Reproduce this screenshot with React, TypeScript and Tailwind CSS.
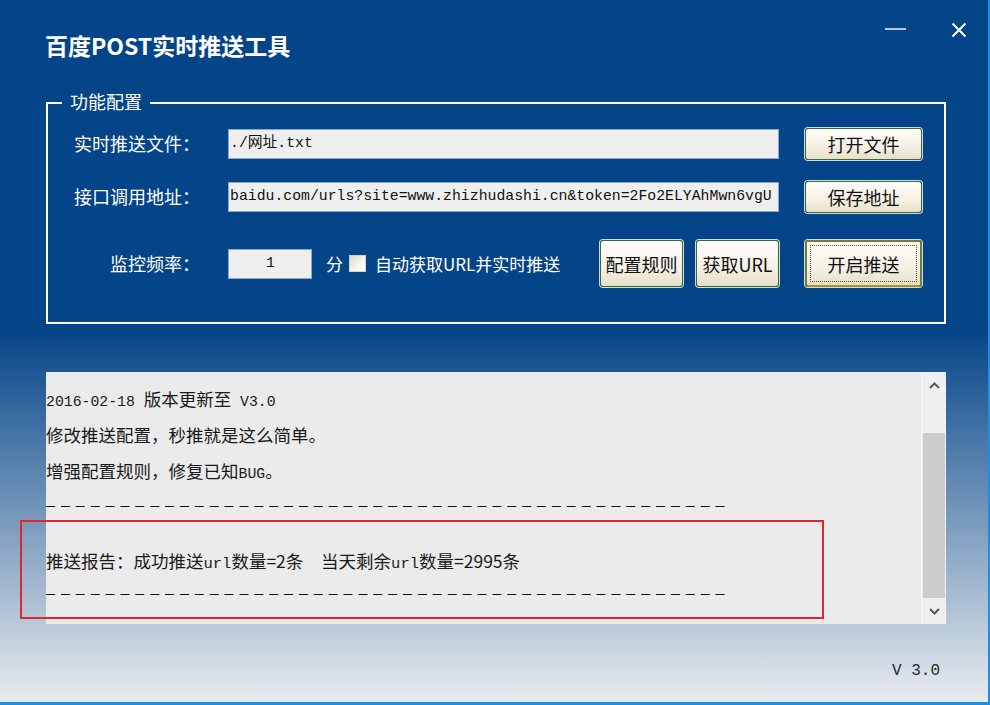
const sans = "font-['Noto_Sans_CJK_SC',sans-serif]";
const mono = "font-['Liberation_Mono','Noto_Sans_CJK_SC',monospace]";

function WinButton({ label, primary }: { label: string; primary?: boolean }) {
  return (
    <button
      className={`relative flex h-full w-full items-center justify-center rounded-[3px] bg-[linear-gradient(180deg,#fefdf9_0%,#f4f0e4_60%,#e6dfc9_100%)] text-[18px] leading-none text-[#111] shadow-[0_0_0_1px_#c9dcec] ${
        primary ? "border-2 border-[#7d7a2c] border-b-[#b08d1c]" : "border border-[#3f6a26]"
      } ${sans}`}
    >
      {primary && (
        <span className="absolute inset-[3px] border border-dotted border-[#555]" />
      )}
      {label}
    </button>
  );
}

function Field({ value, className = "" }: { value: string; className?: string }) {
  return (
    <div
      className={`flex h-[30px] items-center overflow-hidden whitespace-nowrap border border-[#8aa7cc] bg-[#efefef] pl-[1px] text-[14.8px] text-[#111] ${mono} ${className}`}
    >
      {value}
    </div>
  );
}

function Dashes() {
  return (
    <p className={`h-[18px] whitespace-nowrap text-[14.8px] leading-[17px] tracking-[6px] text-[#111] ${mono}`}>
      {"—".repeat(46)}
    </p>
  );
}

function Chevron({ up }: { up?: boolean }) {
  return (
    <svg width="11" height="7" viewBox="0 0 11 7">
      <polyline
        points={up ? "1,6 5.5,1.5 10,6" : "1,1 5.5,5.5 10,1"}
        fill="none"
        stroke="#5a5a5a"
        strokeWidth="2"
      />
    </svg>
  );
}

export default function App() {
  return (
    <div
      className={`relative h-[705px] w-[990px] overflow-hidden border-b-[3px] border-r-2 border-[#1b8fe6] bg-[linear-gradient(180deg,#044488_0px,#044488_330px,#e9ecef_702px)] ${sans}`}
    >
      {/* Title bar */}
      <div className="flex h-[102px] items-start justify-between pl-[45px] pr-[21px]">
        <h1 className="mt-[30px] text-[23px] font-bold leading-[30px] text-white">
          百度POST实时推送工具
        </h1>
        <div className="flex items-start gap-[44px] pt-[22px]">
          <svg width="22" height="16" viewBox="0 0 22 16">
            <line x1="0" y1="7" x2="21" y2="7" stroke="#e8eef6" strokeWidth="1.6" />
          </svg>
          <svg width="16" height="16" viewBox="0 0 16 16">
            <path d="M1.5 1.5 L14.5 14.5 M14.5 1.5 L1.5 14.5" stroke="#fff" strokeWidth="2" />
          </svg>
        </div>
      </div>

      {/* 功能配置 group */}
      <section className="relative ml-[46px] h-[222px] w-[900px] border-2 border-white pr-[22px] pt-[23px]">
        <span className="absolute left-[14px] top-[-14px] bg-[#044488] px-[8px] text-[18px] leading-[22px] text-white">
          功能配置
        </span>

        <div className="flex h-[33px] items-center">
          <label className="w-[152px] text-right text-[18px] text-white">实时推送文件：</label>
          <Field value="./网址.txt" className="ml-[28px] w-[551px]" />
          <div className="ml-[26px] h-[32px] w-[117px]">
            <WinButton label="打开文件" />
          </div>
        </div>

        <div className="mt-[20px] flex h-[33px] items-center">
          <label className="w-[152px] text-right text-[18px] text-white">接口调用地址：</label>
          <Field
            value="baidu.com/urls?site=www.zhizhudashi.cn&token=2Fo2ELYAhMwn6vgU"
            className="ml-[28px] w-[551px]"
          />
          <div className="ml-[26px] h-[32px] w-[117px]">
            <WinButton label="保存地址" />
          </div>
        </div>

        <div className="mt-[27px] flex h-[47px] items-center">
          <label className="w-[152px] text-right text-[18px] text-white">监控频率：</label>
          <Field value="1" className="ml-[28px] h-[29px] w-[84px] justify-center" />
          <span className="ml-[14px] text-[17px] text-white">分</span>
          <div className="ml-[6px] h-[17px] w-[17px] border border-[#d6d2c8] bg-[linear-gradient(135deg,#dcd8cc_0%,#f7f5ef_60%,#ffffff_100%)]" />
          <span className="ml-[9px] text-[17px] text-white">自动获取URL并实时推送</span>
          <div className="ml-auto flex h-full gap-[13px]">
            <div className="h-full w-[83px]">
              <WinButton label="配置规则" />
            </div>
            <div className="h-full w-[83px]">
              <WinButton label="获取URL" />
            </div>
            <div className="ml-[13px] h-full w-[117px]">
              <WinButton label="开启推送" primary />
            </div>
          </div>
        </div>
      </section>

      {/* Log panel */}
      <div className="ml-[46px] mt-[48px] flex h-[252px] w-[900px] bg-[#ebebeb]">
        <div className="flex-1 overflow-hidden pt-[18px] text-[17.5px] leading-[18px] text-[#1a1a1a]">
          <p className="h-[18px] whitespace-nowrap">
            <span className={`text-[14.8px] ${mono}`}>2016-02-18 </span>版本更新至
            <span className={`text-[14.8px] ${mono}`}> V3.0</span>
          </p>
          <p className="mt-[18px] h-[18px] whitespace-nowrap">修改推送配置，秒推就是这么简单。</p>
          <p className="mt-[18px] h-[18px] whitespace-nowrap">
            增强配置规则，修复已知<span className={`text-[14.8px] ${mono}`}>BUG</span>。
          </p>
          <div className="mt-[18px]">
            <Dashes />
          </div>
          <p className="mt-[36px] h-[18px] whitespace-nowrap">
            推送报告：成功推送<span className={`text-[15.5px] ${mono}`}>url</span>数量=2条
            <span className={`whitespace-pre text-[14.8px] ${mono}`}>{"  "}</span>当天剩余
            <span className={`text-[15.5px] ${mono}`}>url</span>数量=2995条
          </p>
          <div className="mt-[16px]">
            <Dashes />
          </div>
        </div>

        {/* Scrollbar */}
        <div className="flex w-[25px] flex-col border-l border-[#f7f7f7] bg-[#f0f0f0]">
          <div className="flex h-[26px] items-center justify-center">
            <Chevron up />
          </div>
          <div className="flex flex-1 flex-col justify-end px-[1px]">
            <div className="h-[165px] bg-[#cdcdcd]" />
          </div>
          <div className="flex h-[26px] items-center justify-center">
            <Chevron />
          </div>
        </div>
      </div>

      {/* Version */}
      <div className="mt-[37px] flex justify-end pr-[48px]">
        <span className={`text-[16px] leading-[20px] text-[#2a2a2a] ${mono}`}>V 3.0</span>
      </div>

      {/* Highlight box */}
      <div className="absolute left-[20px] top-[520px] h-[99px] w-[804px] border-2 border-[#e3262b]" />
    </div>
  );
}
